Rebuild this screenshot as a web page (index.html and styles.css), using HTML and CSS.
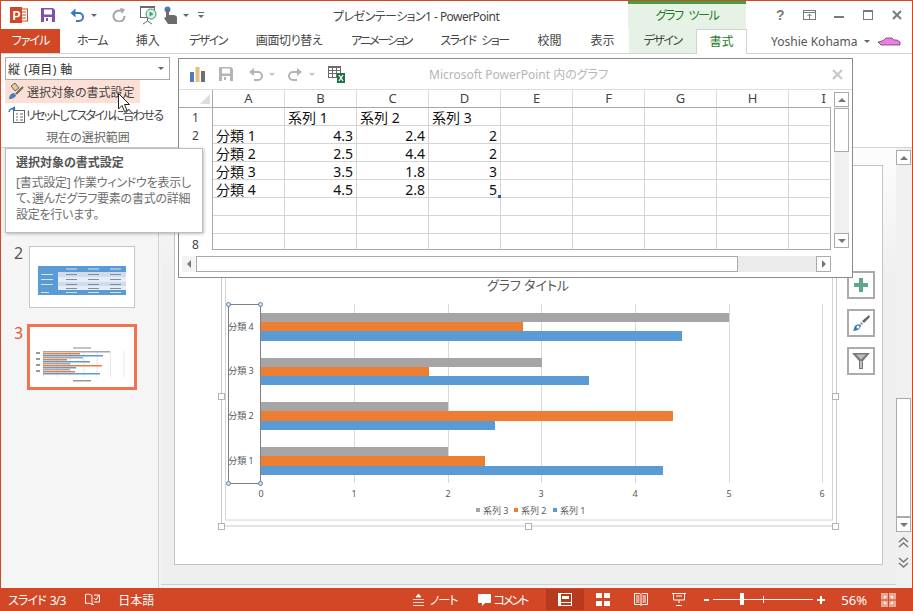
FILE: index.html
```html
<!DOCTYPE html>
<html lang="ja">
<head>
<meta charset="utf-8">
<title>プレゼンテーション1 - PowerPoint</title>
<link rel="stylesheet" href="styles.css">
</head>
<body>
<div class="app">
  <header class="titlebar">
    <div class="qat">
      <svg class="ic-ppt" width="18" height="16" viewBox="0 0 18 16"><rect x="8" y="2" width="9.500" height="12" fill="#fff" stroke="#d24726"/><path d="M11 5h5M11 8h5M11 11h5" stroke="#d24726"/><rect width="12" height="16" fill="#d24726"/><text x="2.500" y="12.500" class="ppt-letter">P</text></svg>
      <svg class="ic-save" width="14" height="14" viewBox="0 0 14 14"><path d="M0 0h12l2 2v12H0z" fill="#7d52a8"/><rect x="3" y="1.500" width="8" height="5" fill="#fff"/><rect x="3" y="9" width="8" height="5" fill="#fff"/><rect x="5" y="10" width="2" height="3" fill="#7d52a8"/></svg>
      <svg class="ic-undo" width="15" height="14" viewBox="0 0 15 14"><path d="M2 5h7a4 4 0 0 1 0 8H6" fill="none" stroke="#3c78b8" stroke-width="2"/><path d="M5.500 0.500v9L0.500 5z" fill="#3c78b8"/></svg>
      <span class="caret c-undo"></span>
      <svg class="ic-redo" width="14" height="14" viewBox="0 0 14 14"><path d="M9 3a5.500 5.500 0 1 0 3.500 5" fill="none" stroke="#a6a6a6" stroke-width="2"/><path d="M8 0l5 1-3 5z" fill="#a6a6a6"/></svg>
      <svg class="ic-show" width="19" height="19" viewBox="0 0 19 19"><rect x="0.500" y="1.500" width="14" height="10" fill="#fff" stroke="#6b6b6b"/><path d="M0 .5h15M7.500 12v3M3 18l4.500-3 4.500 3" stroke="#6b6b6b" fill="none"/><circle cx="11" cy="8" r="5" fill="#d9efe3" stroke="#3f9a6a"/><path d="M9.500 5.500v5l4-2.500z" fill="#3f9a6a"/></svg>
      <svg class="ic-touch" width="14" height="18" viewBox="0 0 14 18"><circle cx="3.500" cy="3.500" r="3" fill="#4a7ebb"/><path d="M2 3h3v6h4c3 0 4 1 4 3v6H4L0 12l2-1z" fill="#6b6b6b"/></svg>
      <span class="caret c-touch"></span>
      <span class="qat-more"></span>
    </div>
    <div class="doc-title">プレゼンテーション1 - PowerPoint</div>
    <div class="ctx-title">グラフ ツール</div>
    <div class="winctl">
      <span class="help">?</span>
      <svg width="13" height="10" viewBox="0 0 13 10"><rect x=".5" y=".5" width="12" height="9" fill="none" stroke="#7a7a7a"/><path d="M.5 2.500h12M6.500 9V4M4.500 6l2-2 2 2" fill="none" stroke="#7a7a7a"/></svg>
      <svg width="10" height="10" viewBox="0 0 10 10"><rect y="6" width="10" height="2" fill="#7a7a7a"/></svg>
      <svg class="wc-wide" width="10" height="10" viewBox="0 0 10 10"><rect x=".5" y=".5" width="9" height="9" fill="none" stroke="#7a7a7a"/><rect width="10" height="2" fill="#7a7a7a"/></svg>
      <svg class="wc-wide" width="10" height="10" viewBox="0 0 10 10"><path d="M1 1l8 8M9 1l-8 8" stroke="#7a7a7a" stroke-width="2"/></svg>
    </div>
  </header>

  <nav class="tabs">
    <div class="tab tab-file">ファイル</div>
    <div class="tab kana">ホーム</div>
    <div class="tab">挿入</div>
    <div class="tab kana">デザイン</div>
    <div class="tab tab-mix">画面切り替え</div>
    <div class="tab kana-tight">アニメーション</div>
    <div class="tab kana tab-spaced">スライド ショー</div>
    <div class="tab">校閲</div>
    <div class="tab">表示</div>
    <div class="tab tab-ctx kana">デザイン</div>
    <div class="tab tab-active">書式</div>
    <div class="user">
      <span>Yoshie Kohama</span>
      <span class="caret c-user"></span>
      <svg width="23" height="9" viewBox="0 0 23 9"><path d="M0 5l4-1 2-1 2-2h6l2 2h3l3 2v3H3z" fill="#f07ae8" stroke="#50304e" stroke-width=".7"/></svg>
    </div>
  </nav>

  <section class="ribbon">
    <div class="select"><span class="select-text">縦 (項目) 軸</span><span class="caret"></span></div>
    <div class="rb-item rb-hot">
      <svg width="17" height="17" viewBox="0 0 17 17"><path d="M3 3l4-3 4 5-4 3z" fill="#e8c890" stroke="#666"/><path d="M15 4L8 11" stroke="#666" stroke-width="2"/><path d="M1 16c0-4 3-6 5-6l2 2c0 2-3 4-7 4z" fill="#4a7ebb"/></svg>
      <span>選択対象の書式設定</span>
    </div>
    <div class="rb-item rb-reset">
      <svg width="18" height="17" viewBox="0 0 18 17"><rect x="5.500" y="4.500" width="11" height="12" fill="#fff" stroke="#666"/><path d="M8 8h2M12 8h3M8 11h2M12 11h3M8 14h2M12 14h3" stroke="#666"/><path d="M1 6a4 4 0 0 1 6-3" fill="none" stroke="#3c78b8" stroke-width="1.500"/><path d="M7 0v5L3 3z" fill="#3c78b8"/></svg>
      <span>リセットしてスタイルに合わせる</span>
    </div>
    <div class="rb-label">現在の選択範囲</div>
  </section>

  <main class="main">
    <aside class="thumbs">
      <div class="thumb-row"><span class="thumb-no"></span><div class="thumb"></div></div>
      <div class="thumb-row"><span class="thumb-no">2</span>
        <div class="thumb">
          <svg class="mini" width="104" height="60" viewBox="0 0 104 60">
            <rect x="8" y="19" width="88" height="29" fill="#e6edf7"/>
            <rect x="28" y="25" width="68" height="5" fill="#cfdcee"/>
            <rect x="28" y="35" width="68" height="4" fill="#cfdcee"/>
            <rect x="8" y="19" width="88" height="6" fill="#5b9bd5"/>
            <rect x="8" y="19" width="20" height="29" fill="#5b9bd5"/>
            <rect x="8" y="43" width="88" height="5" fill="#5b9bd5"/>
            <path d="M36 27.500h11M58 27.500h11M80 27.500h11M36 32.500h11M58 32.500h11M80 32.500h11M36 37.500h11M58 37.500h11M80 37.500h11M36 41.500h11M58 41.500h11M80 41.500h11" stroke="#7f8c9b" stroke-width="1.200"/>
            <path d="M36 45.500h11M58 45.500h11M80 45.500h11M36 22h11M58 22h11M80 22h11M11 27.500h12M11 32.500h12M11 37.500h12M11 45.500h8" stroke="#d5e4f4" stroke-width="1.200"/>
          </svg>
        </div>
      </div>
      <div class="thumb-row"><span class="thumb-no thumb-no-on">3</span>
        <div class="thumb thumb-on">
          <svg class="mini" width="104" height="60" viewBox="0 0 104 60">
            <rect x="43" y="20" width="18" height="2" fill="#c4c4c4"/>
            <path d="M13.500 24v26M27 24v26M40 24v26M54 24v26M67 24v26M80.500 24v26M94 24v26" stroke="#ddd" stroke-width=".7"/>
            <rect x="13" y="24" width="67" height="1.500" fill="#a5a5a5"/><rect x="13" y="26" width="37" height="1.500" fill="#ed7d31"/><rect x="13" y="28" width="60" height="1.500" fill="#5b9bd5"/>
            <rect x="13" y="30" width="40" height="1.500" fill="#a5a5a5"/><rect x="13" y="32" width="24" height="1.500" fill="#ed7d31"/><rect x="13" y="34" width="47" height="1.500" fill="#5b9bd5"/>
            <rect x="13" y="36" width="27" height="1.500" fill="#a5a5a5"/><rect x="13" y="38" width="59" height="1.500" fill="#ed7d31"/><rect x="13" y="40" width="33" height="1.500" fill="#5b9bd5"/>
            <rect x="13" y="42" width="27" height="1.500" fill="#a5a5a5"/><rect x="13" y="44" width="32" height="1.500" fill="#ed7d31"/><rect x="13" y="46" width="57" height="1.500" fill="#5b9bd5"/>
            <rect x="6" y="25" width="4" height="2" fill="#999"/><rect x="6" y="31" width="4" height="2" fill="#999"/><rect x="6" y="37" width="4" height="2" fill="#999"/><rect x="6" y="43" width="4" height="2" fill="#999"/>
            <rect x="43" y="53" width="18" height="1.500" fill="#999"/>
          </svg>
        </div>
      </div>
    </aside>

    <div class="stage">
      <div class="slide">
        <svg class="chart" width="708" height="400" viewBox="174 165 708 400">
          <rect x="221.500" y="120" width="615" height="406" class="frame"/>
          <rect x="225.500" y="120" width="607" height="400" class="frame-in"/>
          <g class="grid">
            <path d="M354.500 304v179M448.500 304v179M541.500 304v179M635.500 304v179M729.500 304v179M822.500 304v179"/>
          </g>
          <g class="s3">
            <rect x="261" y="313" width="468" height="9"/><rect x="261" y="358" width="281" height="9"/><rect x="261" y="402" width="187" height="9"/><rect x="261" y="447" width="187" height="9"/>
          </g>
          <g class="s2">
            <rect x="261" y="322" width="262" height="9"/><rect x="261" y="367" width="168" height="9"/><rect x="261" y="411" width="412" height="10"/><rect x="261" y="456" width="224" height="10"/>
          </g>
          <g class="s1">
            <rect x="261" y="331" width="421" height="10"/><rect x="261" y="376" width="328" height="9"/><rect x="261" y="421" width="234" height="9"/><rect x="261" y="466" width="402" height="9"/>
          </g>
          <rect x="228.500" y="304.500" width="32" height="179" class="axis-box"/>
          <g class="handles">
            <circle cx="228.500" cy="304.500" r="2"/><circle cx="260.500" cy="304.500" r="2"/><circle cx="228.500" cy="483.500" r="2"/><circle cx="260.500" cy="483.500" r="2"/>
          </g>
          <text x="528" y="290" class="c-title">グラフ タイトル</text>
          <g class="c-cat">
            <text x="241" y="330">分類 4</text><text x="241" y="374">分類 3</text><text x="241" y="419">分類 2</text><text x="241" y="464">分類 1</text>
          </g>
          <g class="c-val">
            <text x="261" y="497">0</text><text x="354" y="497">1</text><text x="448" y="497">2</text><text x="541" y="497">3</text><text x="635" y="497">4</text><text x="729" y="497">5</text><text x="822" y="497">6</text>
          </g>
          <g class="c-leg">
            <rect x="476" y="508" class="lg3" width="4" height="4"/><text x="483" y="514">系列 3</text>
            <rect x="514" y="508" class="lg2" width="4" height="4"/><text x="521" y="514">系列 2</text>
            <rect x="553" y="508" class="lg1" width="4" height="4"/><text x="560" y="514">系列 1</text>
          </g>
          <g class="sq">
            <rect x="218.500" y="393.500" width="6" height="6"/><rect x="832.500" y="393.500" width="6" height="6"/>
            <rect x="218.500" y="523.500" width="6" height="6"/><rect x="525.500" y="523.500" width="6" height="6"/><rect x="832.500" y="523.500" width="6" height="6"/>
          </g>
        </svg>
        <div class="fab">
          <div class="fab-btn"><svg width="16" height="16" viewBox="0 0 16 16"><path d="M6 1h4v5h5v4h-5v5H6v-5H1V6h5z" fill="#5fa68c"/></svg></div>
          <div class="fab-btn"><svg width="18" height="18" viewBox="0 0 18 18"><path d="M17 1l1 2-6 6-2-2z" fill="#666"/><path d="M9 8l2 2-1 1-2-2z" fill="#888"/><path d="M1 17c1-1 1-5 3-6 2-1 4-1 5 0 0 3-3 6-8 6z" fill="#3f78b8"/><circle cx="6" cy="13" r="1.500" fill="#fff"/></svg></div>
          <div class="fab-btn"><svg width="18" height="18" viewBox="0 0 18 18"><path d="M0 1h18l-7 8v8H7V9z" fill="#7a7a7a"/><path d="M4 2.500h10l-5 5z" fill="#bdbdbd"/><path d="M8.500 9h1v7h-1z" fill="#fff"/></svg></div>
        </div>
      </div>
    </div>

    <div class="vscroll">
      <div class="sb-btn"><span class="tri-up"></span></div>
      <div class="sb-track"><div class="sb-thumb"></div></div>
      <div class="sb-btn"><span class="tri-down"></span></div>
      <svg class="sb-nav" width="15" height="16" viewBox="0 0 15 16"><path d="M3 7l4.500-4L12 7M3 12l4.500-4L12 12" fill="none" stroke="#777" stroke-width="1.500"/></svg>
      <svg class="sb-nav" width="15" height="16" viewBox="0 0 15 16"><path d="M3 4l4.500 4L12 4M3 9l4.500 4L12 9" fill="none" stroke="#777" stroke-width="1.500"/></svg>
    </div>
  </main>

  <footer class="status">
    <span class="st-text st-slide">スライド 3/3</span>
    <svg class="st-book" width="15" height="14" viewBox="0 0 15 14"><path d="M7 2.500C5 1 3 1 .5 1.500v9C3 10 5 10 7 11.500V2.500zM7 11.500h2" fill="none" stroke="#fff"/><path d="M9 2h5.500v7H9" fill="none" stroke="#fff"/><path d="M9 5l2 2 3-5" fill="none" stroke="#fff"/></svg>
    <span class="st-text st-lang">日本語</span>
    <div class="st-right">
      <div class="st-note">
        <svg width="11" height="12" viewBox="0 0 11 12"><path d="M5.500 0L3 3h5z M0 5.500h11M0 8.500h11M0 11.500h11" fill="#fff" stroke="#fff" stroke-width=".8"/></svg>
        <span class="st-text st-kana">ノート</span>
      </div>
      <div class="st-comment">
        <svg width="13" height="12" viewBox="0 0 13 12"><path d="M1 0h11a1 1 0 0 1 1 1v7a1 1 0 0 1-1 1H7l-3 3V9H1a1 1 0 0 1-1-1V1a1 1 0 0 1 1-1z" fill="#fff"/></svg>
        <span class="st-text st-kana-t">コメント</span>
      </div>
      <div class="view view-on"><svg width="14" height="13" viewBox="0 0 14 13"><rect x=".5" y=".5" width="13" height="12" fill="none" stroke="#fff"/><rect x="4" y="3" width="7" height="3" fill="#fff"/><rect y="9" width="14" height="1" fill="#fff"/><rect y="0" width="3" height="13" fill="#fff"/></svg></div>
      <div class="view"><svg width="14" height="13" viewBox="0 0 14 13"><path d="M0 0h6v5H0zM8 0h6v5H8zM0 8h6v5H0zM8 8h6v5H8z" fill="#fff"/></svg></div>
      <div class="view"><svg width="14" height="13" viewBox="0 0 14 13"><path d="M.5.500h5.500L7 1.500 8 .5h5.500v11H8L7 12.500 6 11.500H.5zM7 1.500v11M2 3h3.500M2 5h3.500M2 7h3.500M2 9h3.500M8.500 3H12M8.500 5H12M8.500 7H12M8.500 9H12" fill="none" stroke="#fff"/></svg></div>
      <div class="view"><svg width="14" height="13" viewBox="0 0 14 13"><path d="M0 .5h14M1.500 1v6h11V1M7 7v3M4 12.500h6M4 3h6" fill="none" stroke="#fff"/></svg></div>
      <div class="zoom">
        <span class="z-btn z-minus"></span>
        <div class="z-track"><span class="z-tick"></span><span class="z-thumb"></span></div>
        <span class="z-btn z-plus"></span>
      </div>
      <span class="st-text st-pct">56%</span>
      <svg class="st-fit" width="15" height="14" viewBox="0 0 15 14"><rect width="15" height="14" fill="#eec7bb" opacity=".75"/><path d="M0 7h15M7.500 0v14" stroke="#d24726"/><path d="M3 3h3L3 6zM12 3H9l3 3zM3 11h3L3 8zM12 11H9l3-3z" fill="#fff"/></svg>
    </div>
  </footer>

  <section class="sheet">
    <div class="sheet-bar">
      <svg class="sb-chart" width="15" height="15" viewBox="0 0 15 15"><rect y="5" width="4" height="10" fill="#4a7ebb"/><rect x="5.500" width="4" height="15" fill="#e6bd80"/><rect x="11" y="4" width="4" height="11" fill="#6e6e6e"/></svg>
      <svg class="sb-save" width="14" height="14" viewBox="0 0 14 14"><path d="M0 0h12l2 2v12H0z" fill="#b4b4b4"/><rect x="3" y="1.500" width="8" height="5" fill="#fff"/><rect x="3" y="9" width="8" height="5" fill="#fff"/><rect x="5" y="10" width="2" height="3" fill="#b4b4b4"/></svg>
      <svg class="sb-undo" width="15" height="13" viewBox="0 0 15 13"><path d="M3 4h7a4 4 0 0 1 0 8H6" fill="none" stroke="#b4b4b4" stroke-width="2"/><path d="M6 0v8L1 4z" fill="#b4b4b4"/></svg>
      <span class="caret caret-light c-su"></span>
      <svg class="sb-redo" width="15" height="13" viewBox="0 0 15 13"><path d="M12 4H5a4 4 0 0 0 0 8h4" fill="none" stroke="#b4b4b4" stroke-width="2"/><path d="M9 0v8l5-4z" fill="#b4b4b4"/></svg>
      <span class="caret caret-light c-sr"></span>
      <svg class="sb-xl" width="17" height="17" viewBox="0 0 17 17"><rect x=".5" y=".5" width="12" height="11" fill="#fff" stroke="#6b6b6b"/><path d="M0 1.500h13M0 4.500h13M0 7.500h13M4.500 2v9M8.500 2v9" stroke="#6b6b6b"/><rect x="9" y="7" width="8" height="10" fill="#217346"/><path d="M11 9l4 6M15 9l-4 6" stroke="#fff" stroke-width="1.300"/></svg>
      <span class="sheet-title">Microsoft PowerPoint 内のグラフ</span>
      <svg class="sb-close" width="11" height="11" viewBox="0 0 11 11"><path d="M1 1l9 9M10 1l-9 9" stroke="#c8c8c8" stroke-width="2.200"/></svg>
    </div>
    <div class="sheet-body">
      <div class="cells">
        <div class="ch corner"><span class="corner-tri"></span></div><div class="ch">A</div><div class="ch">B</div><div class="ch">C</div><div class="ch">D</div><div class="ch">E</div><div class="ch">F</div><div class="ch">G</div><div class="ch">H</div><div class="ch ch-i">I</div>
        <div class="rh">1</div><div class="c"></div><div class="c">系列 1</div><div class="c">系列 2</div><div class="c">系列 3</div><div class="c"></div><div class="c"></div><div class="c"></div><div class="c"></div><div class="c"></div>
        <div class="rh">2</div><div class="c">分類 1</div><div class="c n">4.3</div><div class="c n">2.4</div><div class="c n">2</div><div class="c"></div><div class="c"></div><div class="c"></div><div class="c"></div><div class="c"></div>
        <div class="rh"></div><div class="c">分類 2</div><div class="c n">2.5</div><div class="c n">4.4</div><div class="c n">2</div><div class="c"></div><div class="c"></div><div class="c"></div><div class="c"></div><div class="c"></div>
        <div class="rh"></div><div class="c">分類 3</div><div class="c n">3.5</div><div class="c n">1.8</div><div class="c n">3</div><div class="c"></div><div class="c"></div><div class="c"></div><div class="c"></div><div class="c"></div>
        <div class="rh"></div><div class="c">分類 4</div><div class="c n">4.5</div><div class="c n">2.8</div><div class="c n corner-mark">5</div><div class="c"></div><div class="c"></div><div class="c"></div><div class="c"></div><div class="c"></div>
        <div class="rh"></div><div class="c"></div><div class="c"></div><div class="c"></div><div class="c"></div><div class="c"></div><div class="c"></div><div class="c"></div><div class="c"></div><div class="c"></div>
        <div class="rh"></div><div class="c"></div><div class="c"></div><div class="c"></div><div class="c"></div><div class="c"></div><div class="c"></div><div class="c"></div><div class="c"></div><div class="c"></div>
        <div class="rh rh-8">8</div><div class="c"></div><div class="c"></div><div class="c"></div><div class="c"></div><div class="c"></div><div class="c"></div><div class="c"></div><div class="c"></div><div class="c"></div>
      </div>
      <div class="s-v">
        <div class="sb-btn"><span class="tri-up"></span></div>
        <div class="s-v-track"><div class="s-v-thumb"></div></div>
        <div class="sb-btn"><span class="tri-down"></span></div>
      </div>
    </div>
    <div class="s-h">
      <div class="s-h-left"><span class="tri-left"></span></div>
      <div class="s-h-thumb"></div>
      <div class="s-h-track"></div>
      <div class="s-h-right"><span class="tri-right"></span></div>
    </div>
  </section>

  <div class="tooltip">
    <div class="tip-title">選択対象の書式設定</div>
    <p class="tip-body">[書式設定] 作業ウィンドウを表示し<br>て、選んだグラフ要素の書式の詳細<br>設定を行います。</p>
  </div>

  <svg class="cursor" width="13" height="20" viewBox="0 0 13 20"><path d="M.5.500v15.500l3.500-3.500 2.500 6 2.500-1-2.500-6h5z" fill="#fff" stroke="#222"/></svg>
</div>
</body>
</html>
```

FILE: styles.css
```css
* { box-sizing: border-box; }
html, body { margin: 0; padding: 0; }
body {
  font-family: "Noto Sans", "Noto Sans CJK JP", sans-serif;
  font-feature-settings: "palt";
  font-size: 12px;
  color: #444;
  background: #fff;
}
.app {
  position: relative;
  width: 913px;
  height: 611px;
  overflow: hidden;
  display: flex;
  flex-direction: column;
  border: 1px solid #d24726;
  border-bottom: 0;
  background: #fff;
}
svg { display: block; flex: none; }

/* title bar */
.titlebar { display: flex; height: 28px; flex: none; }
.qat { width: 332px; display: flex; align-items: center; flex: none; position: relative; }
.ic-ppt { margin-left: 9px; }
.ic-save { margin-left: 13px; }
.ic-undo { margin-left: 15px; }
.c-undo { margin-left: 6px; }
.ic-redo { margin-left: 15px; }
.ic-show { margin-left: 14px; }
.ic-touch { margin-left: 5px; }
.c-touch { margin-left: 5px; }
.ppt-letter { font: bold 12px "Liberation Sans", sans-serif; fill: #fff; }
.qat-more { width: 6px; height: 6px; margin-left: 9px; border-top: 1px solid #666; border-bottom: 3px solid transparent; position: relative; }
.qat-more::after { content: ""; position: absolute; left: 0; top: 2px; border: 3px solid transparent; border-top-color: #666; }
.caret { display: inline-block; width: 0; height: 0; border: 3px solid transparent; border-top: 3px solid #666; border-bottom: 0; flex: none; }
.caret-light { border-top-color: #c4c4c4; }
.doc-title { width: 295px; flex: none; line-height: 31px; font-size: 12px; color: #444; letter-spacing: -.55px; white-space: nowrap; }
.ctx-title {
  width: 118px; flex: none; background: #e7f2e7; border-top: 4px solid #43a047;
  margin-top: -1px; height: 29px; text-align: center; line-height: 24px; color: #217a21; font-size: 12px;
  letter-spacing: -1.400px; word-spacing: 4px;
}
.winctl { flex: 1; display: flex; align-items: center; padding-left: 30px; gap: 18px; padding-bottom: 1px; }
.wc-wide { margin-left: 1px; }
.help { font: bold 14px "Liberation Sans", sans-serif; color: #7a7a7a; width: 9px; }

/* tabs */
.tabs { display: flex; height: 25px; flex: none; border-bottom: 1px solid #d2d2d2; }
.tab { padding: 0 14.500px; line-height: 24px; font-size: 12px; color: #444; white-space: nowrap; height: 24px; flex: none; }
.kana { letter-spacing: -1.500px; }
.kana-tight { letter-spacing: -2.100px; }
.tab-mix { letter-spacing: -.4px; }
.tab-spaced { word-spacing: 4px; }
.tab-file { width: 59px; padding: 0; text-align: center; background: #d24726; color: #fff; margin-right: 2.500px; letter-spacing: -1px; }
.tab-ctx { background: #e7f2e7; width: 67px; padding: 0; text-align: center; margin-left: auto; }
.tab-active {
  width: 51px; padding: 0; text-align: center; height: 25px; background: #fff; color: #217a21;
  border: 1px solid #d2d2d2; border-bottom: 0; font-size: 12px; line-height: 24px;
}
.user { display: flex; align-items: center; flex: none; width: 165px; padding-left: 24px; height: 24px; color: #555; font-size: 12px; white-space: nowrap; }
.c-user { margin: 0 8px 0 7px; }

/* ribbon */
.ribbon { height: 94px; flex: none; padding: 3px 0 0 4px; border-bottom: 1px solid #d2d2d2; }
.select {
  width: 165px; height: 23px; border: 1px solid #ababab; display: flex; align-items: center;
  justify-content: space-between; padding: 0 5px 0 2px; color: #333; font-size: 12px;
}
.select-text { letter-spacing: .4px; }
.rb-item { display: flex; align-items: center; height: 23px; gap: 2px; font-size: 12px; color: #444; white-space: nowrap; padding-left: 3px; }
.rb-hot { width: 135px; background: #fcdfd5; }
.rb-reset { gap: 0; letter-spacing: -1.700px; }
.rb-label { width: 166px; text-align: center; margin-top: 3px; color: #666; font-size: 12px; line-height: 18px; }

/* main area */
.main { flex: 1; display: flex; min-height: 0; background: #f3f3f3; }
.thumbs { width: 158px; flex: none; border-right: 1px solid #d4d4d4; padding-top: 18px; background: #f5f5f5; margin-right: 2px; }
.thumb-row { display: flex; height: 62px; margin-bottom: 18px; padding-left: 13px; }
.thumb-no { width: 15px; font-size: 16px; line-height: 12px; padding-top: 1px; color: #555; margin-top: 0; }
.thumb-no-on { color: #e2583a; }
.thumb { width: 106px; height: 62px; background: #fff; border: 1px solid #c6c6c6; }
.thumb-on { border-color: #f2714f; box-shadow: 0 0 0 2px #f2714f; }

.stage {
  flex: 1; height: 437px; padding: 17px 13px 0; border-bottom: 1px solid #cfcfcf;
  background: linear-gradient(#fdfdfd, #efefef 30%);
}
.slide { position: relative; height: 400px; background: #fff; border: 1px solid #c4c4c4; width: 709px; }
.chart { position: absolute; left: -1px; top: -1px; }
.frame { fill: none; stroke: #cacaca; }
.frame-in { fill: none; stroke: #d4d4d4; }
.grid path { stroke: #d9d9d9; fill: none; }
.s1 rect, .lg1 { fill: #5b9bd5; }
.s2 rect, .lg2 { fill: #ed7d31; }
.s3 rect, .lg3 { fill: #a5a5a5; }
.axis-box { fill: none; stroke: #808080; }
.handles circle { fill: #cfe0f0; stroke: #5f86b3; }
.c-title { font-size: 13px; fill: #595959; text-anchor: middle; }
.c-cat text { font-size: 9px; fill: #595959; text-anchor: middle; }
.c-val text { font-size: 9px; fill: #595959; text-anchor: middle; }
.c-leg text { font-size: 9px; fill: #595959; }
.sq rect { fill: #fff; stroke: #b4b4b4; }

.fab { position: absolute; left: 672px; top: 105px; display: flex; flex-direction: column; gap: 10px; }
.fab-btn { width: 28px; height: 28px; background: #fff; border: 2px solid #ababab; display: flex; align-items: center; justify-content: center; }

/* scrollbars */
.vscroll { width: 16px; flex: none; display: flex; flex-direction: column; background: #f0f0f0; padding-top: 2px; height: 440px; }
.sb-btn { height: 15px; width: 15px; flex: none; border: 1px solid #ababab; background: #fff; display: flex; align-items: center; justify-content: center; }
.sb-track { flex: none; height: 352px; position: relative; padding-top: 233px; }
.sb-thumb { width: 15px; height: 119px; background: #fff; border: 1px solid #ababab; }
.sb-nav { margin-top: 3px; }
.tri-up, .tri-down, .tri-left, .tri-right { width: 0; height: 0; display: block; border: 4px solid transparent; }
.tri-up { border-bottom-color: #777; border-top: 0; }
.tri-down { border-top-color: #777; border-bottom: 0; }
.tri-left { border-right-color: #777; border-left: 0; }
.tri-right { border-left-color: #777; border-right: 0; }

/* status bar */
.status { height: 23px; flex: none; background: #d24726; display: flex; align-items: center; margin: 0 -1px; color: #fff; }
.st-text { color: #fff; font-size: 12px; white-space: nowrap; }
.st-slide { margin-left: 8px; letter-spacing: -.9px; word-spacing: 2px; }
.st-book { margin-left: 20px; }
.st-lang { margin-left: 18px; font-size: 12px; }
.st-kana { letter-spacing: -1px; }
.st-kana-t { letter-spacing: -2px; }
.st-right { margin-left: auto; display: flex; align-items: center; height: 23px; }
.st-note { display: flex; align-items: center; gap: 6px; margin-right: 20px; }
.st-comment { display: flex; align-items: center; gap: 3px; margin-right: 19px; }
.view { width: 38px; height: 21px; display: flex; align-items: center; justify-content: center; }
.view-on { background: #b83a1e; }
.zoom { display: flex; align-items: center; margin-left: 6px; }
.z-btn { position: relative; display: block; height: 7px; }
.z-minus { width: 5px; }
.z-plus { width: 8px; }
.z-minus::before, .z-plus::before { content: ""; position: absolute; left: 0; right: 0; top: 2.500px; height: 2px; background: #fff; }
.z-plus::after { content: ""; position: absolute; top: -.500px; bottom: -.500px; left: 3px; width: 2px; background: #fff; }
.z-track { position: relative; width: 100px; height: 1px; background: #fff; margin: 0 4px; }
.z-thumb { position: absolute; left: 27px; top: -6px; width: 4px; height: 12px; background: #fff; }
.z-tick { position: absolute; left: 50px; top: -3px; width: 1px; height: 7px; background: #fff; }
.st-pct { margin-left: 16px; font-size: 13px; }
.st-fit { margin: 0 17px 0 14px; }

/* embedded sheet window */
.sheet {
  position: absolute; left: 177px; top: 57px; width: 675px; height: 220px;
  background: #fff; border: 1px solid #8a8a8a; display: flex; flex-direction: column;
}
.sheet-bar { height: 31px; flex: none; display: flex; align-items: center; border-bottom: 1px solid #dcdcdc; position: relative; }
.sb-chart { margin-left: 11px; }
.sb-save { margin-left: 14px; }
.sb-undo { margin-left: 15px; }
.c-su { margin-left: 6px; }
.sb-redo { margin-left: 13px; }
.c-sr { margin-left: 6px; }
.sb-xl { margin-left: 13px; }
.sheet-title { margin-left: 84px; font-size: 12px; color: #b5b5b5; }
.sb-close { margin-left: auto; margin-right: 9px; }
.sheet-body { display: flex; flex: none; height: 160px; }
.cells {
  display: grid; flex: none; width: 652px;
  grid-template-columns: 34px repeat(8, 72px) 42px;
  grid-template-rows: repeat(8, 18px) 16px;
}
.ch { border-right: 1px solid #dcdcdc; border-bottom: 1px solid #a8a8a8; text-align: center; font-size: 13px; line-height: 16px; color: #444; position: relative; }
.corner { border-right-color: #a8a8a8; }
.corner-tri { position: absolute; right: 2px; bottom: 3px; width: 0; height: 0; border-left: 10px solid transparent; border-bottom: 10px solid #dedede; }
.ch-i { border-right: 0; text-align: right; padding-right: 5px; }
.rh { border-right: 1px solid #a8a8a8; text-align: center; font-size: 12px; line-height: 20px; color: #444; padding-left: 0; }
.rh-8 { line-height: 22px; }
.c { border-right: 1px solid #d4d4d4; border-bottom: 1px solid #d4d4d4; font-size: 14px; line-height: 20px; color: #111; padding: 0 3px; white-space: nowrap; position: relative; font-feature-settings: normal; }
.c:nth-child(10n) { border-right-color: #a8a8a8; }
.cells > .c:nth-last-child(-n+9) { border-bottom-color: #a8a8a8; }
.n { text-align: right; }
.corner-mark::after { content: ""; position: absolute; right: -1px; bottom: -1px; width: 3px; height: 3px; background: #3a4fb0; }
.s-v { width: 15px; margin: 2px 0 0 3px; height: 156px; display: flex; flex-direction: column; background: #f0f0f0; }
.s-v-track { flex: 1; padding-top: 1px; }
.s-v-thumb { height: 44px; background: #fff; border: 1px solid #ababab; }
.s-h { display: flex; height: 16px; margin: 6px 0 0 3px; width: 649px; background: #f4f4f4; }
.s-h-left { width: 14px; display: flex; align-items: center; justify-content: center; }
.s-h-thumb { width: 542px; background: #fff; border: 1px solid #ababab; }
.s-h-track { width: 78px; background: #ebebeb; }
.s-h-right { width: 15px; border: 1px solid #ababab; background: #fff; display: flex; align-items: center; justify-content: center; }

/* tooltip */
.tooltip {
  position: absolute; left: 4px; top: 147px; width: 198px; height: 85px; background: #fff;
  border: 1px solid #bdbdbd; box-shadow: 1px 1px 3px rgba(0,0,0,.25); padding: 5px 10px;
}
.tip-title { font-weight: 700; font-size: 12px; color: #555; line-height: 18px; }
.tip-body { margin: 3px 0 0; font-size: 12px; line-height: 16px; color: #6e6e6e; letter-spacing: -.25px; white-space: nowrap; }

.cursor { position: absolute; left: 117px; top: 92px; }
.mini { display: block; }
```
